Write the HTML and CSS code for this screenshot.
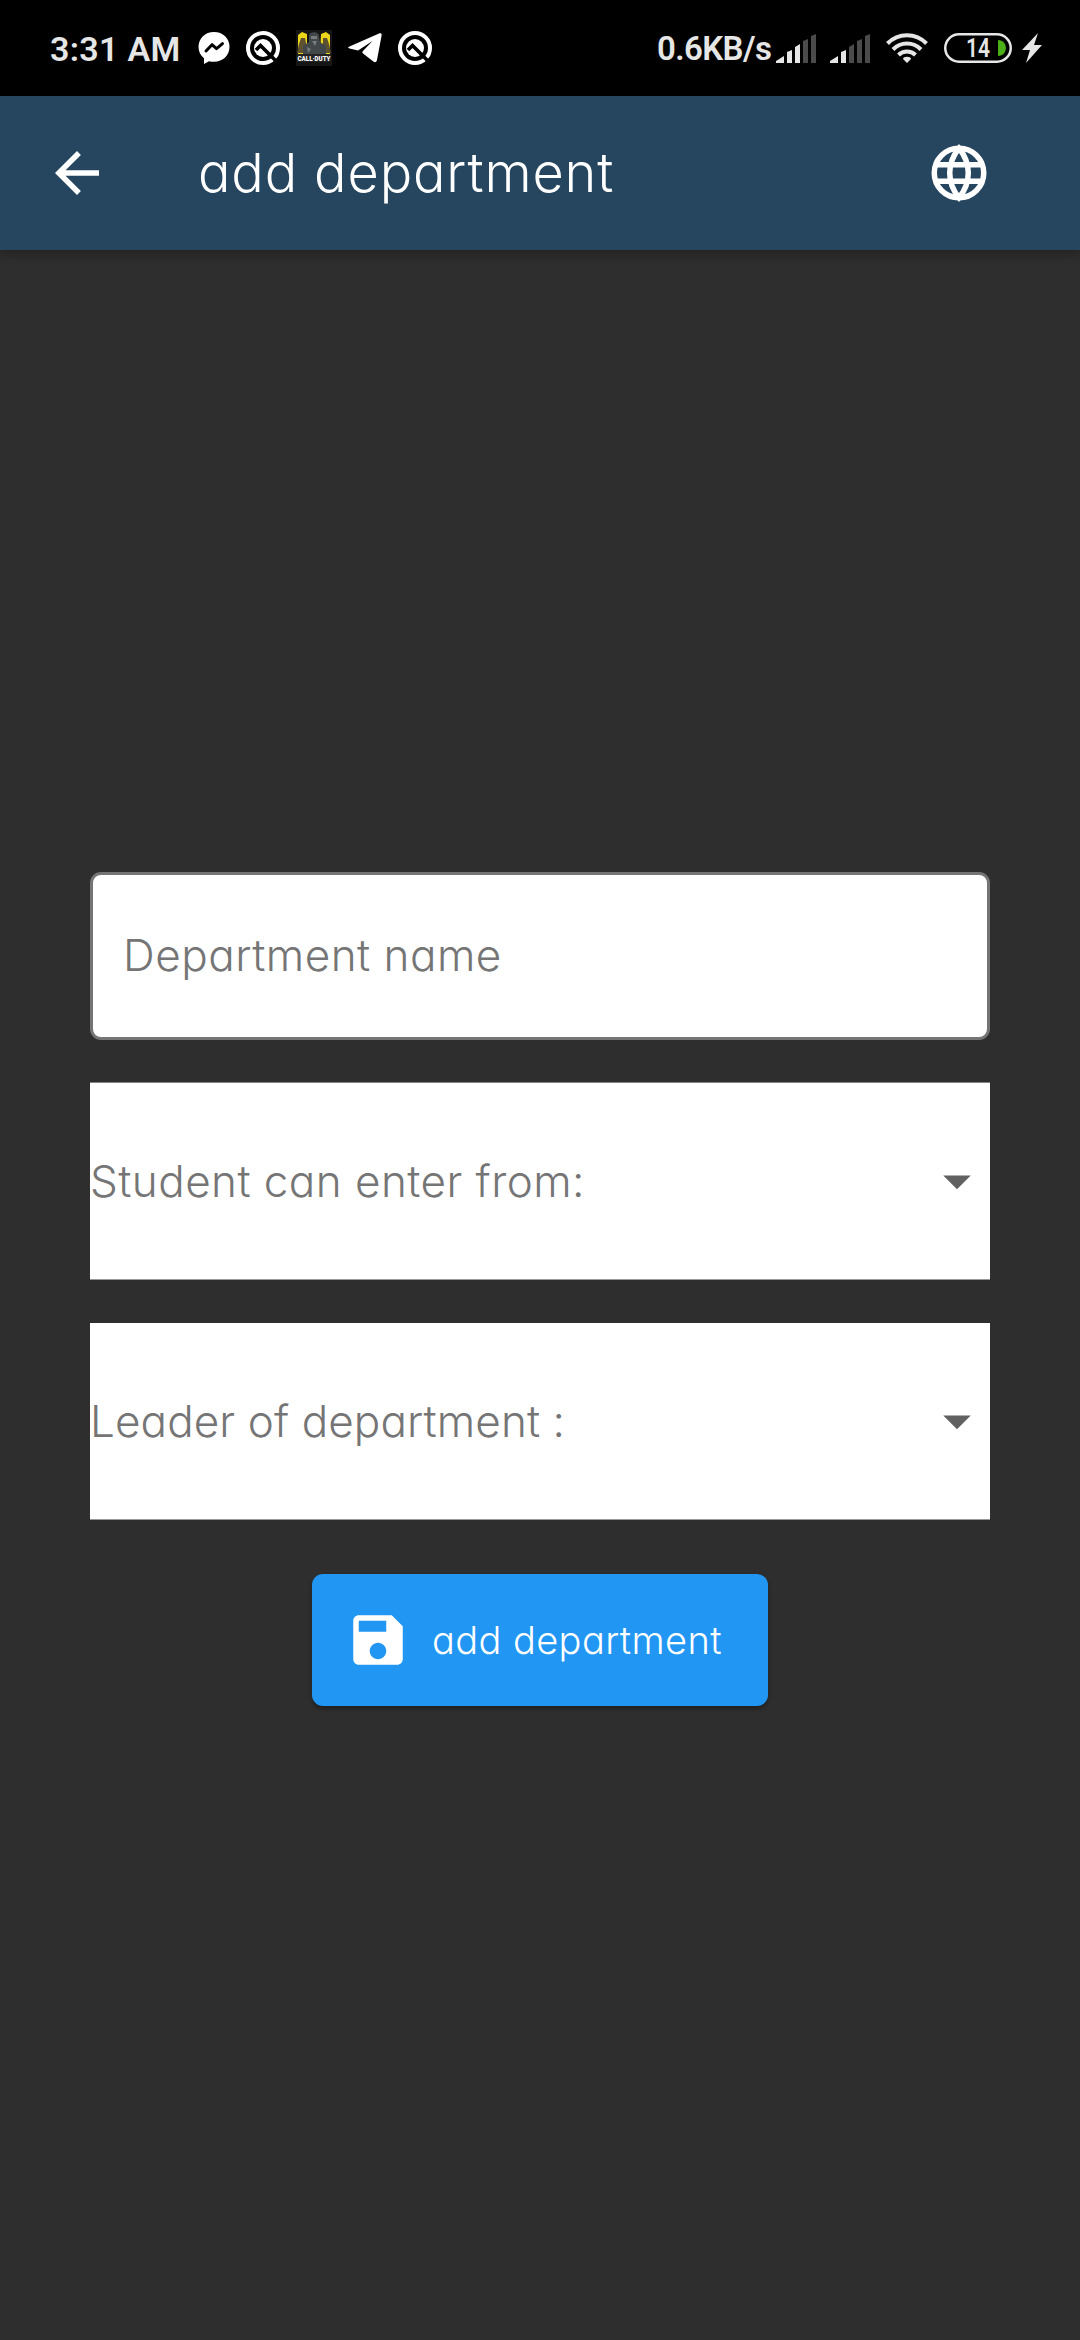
FILE: index.html
```html
<!DOCTYPE html>
<html lang="en">
<head>
<meta charset="utf-8">
<title>add department</title>
<link rel="stylesheet" href="styles.css">
</head>
<body>
<div class="screen">
  <div class="status">
    <span class="time">3:31 AM</span>
    <div class="notifications">
      <svg width="32" height="32" viewBox="0 0 32 32"><path fill="#fff" d="M16 0C7 0 .5 6.300.5 14.800c0 5 2.200 8.900 5.500 11.400V32l5-2.800c1.600.5 3.300.6 5 .6 9 0 15.500-6.500 15.500-15S25 0 16 0z"/><path d="M8 19l6-6.300 4.500 4 6-5" fill="none" stroke="#000" stroke-width="3" stroke-linejoin="round" stroke-linecap="round"/></svg>
      <svg width="34" height="34" viewBox="0 0 34 34"><circle cx="17" cy="17" r="15" stroke-width="4" fill="none" stroke="#fff"/><circle cx="17" cy="17" r="9" fill="#fff"/><path d="M10 19l4.500-4.500L30 30" stroke="#000" stroke-width="3.600" fill="none"/></svg>
      <svg class="game" width="36" height="36" viewBox="0 0 36 36"><rect width="36" height="36" fill="#151513"/><path fill="#ecd51a" d="M2 5l4-3 5 2v20H2zM25 4l5-2 4 3v19H24z"/><path fill="#5d5130" d="M5 8h4l1 5 3 10H1l2-9zM27 8h4l2 6 2 9H24l3-10z"/><path fill="#42474a" d="M13 6c0-5 10-5 10 0l1 6 6 4v9H7v-9l6-4z"/><path fill="#777b7b" d="M15 6h6v3h-6zM16 11h5l-2 5zM11 17l4 2-3 4z"/><path fill="#222322" d="M1 24h34v8H1z"/><text class="game-name" x="1.500" y="30.500" textLength="33" lengthAdjust="spacingAndGlyphs">CALL·DUTY</text></svg>
      <svg width="34" height="30" viewBox="0 0 34 30"><path fill="#fff" d="M1.500 13.400L31 .4c2-.8 3 .3 2.600 2.200L29 27c-.5 2.200-1.900 2.700-3.600 1.500L15 20.500c-1-.8-.8-1.600 0-2.500l9.500-10L10 17.500 1.600 15.500C-.3 15-.3 14.200 1.500 13.400z"/></svg>
      <svg width="34" height="34" viewBox="0 0 34 34"><circle cx="17" cy="17" r="15" stroke-width="4" fill="none" stroke="#fff"/><circle cx="17" cy="17" r="9" fill="#fff"/><path d="M10 19l4.500-4.500L30 30" stroke="#000" stroke-width="3.600" fill="none"/></svg>
    </div>
    <span class="speed">0.6KB/s</span>
    <svg class="signal" width="40" height="29" viewBox="0 0 40 29"><path fill="#e6e6e6" d="M0 29v-2l8-5v7zM11 29V18l5-2v13zM19 29V13l5-3v19z"/><path fill="#4b4b4b" d="M27 29V7l5-2v24zM35 29V2l5-2v29z"/></svg>
    <svg class="signal second" width="40" height="29" viewBox="0 0 40 29"><path fill="#e6e6e6" d="M0 29v-2l8-5v7zM11 29V18l5-2v13z"/><path fill="#4b4b4b" d="M19 29V13l5-3v19zM27 29V7l5-2v24zM35 29V2l5-2v29z"/></svg>
    <svg class="wifi" width="42" height="30" viewBox="0 0 42 30"><g fill="none" stroke="#e6e6e6" stroke-width="4"><path d="M1.500 10.500a27 27 0 0 1 39 0M7 16.500a19.500 19.500 0 0 1 28 0M12.500 22a12 12 0 0 1 17 0"/></g><path fill="#e6e6e6" d="M21 30l-4-4c0-3 8-3 8 0z"/></svg>
    <svg class="battery" width="68" height="30" viewBox="0 0 68 30"><rect x="1.250" y="1.250" width="65.500" height="27.500" rx="13.750" fill="none" stroke="#e6e6e6" stroke-width="2.500"/><path fill="#4caf17" d="M54 7c10.500 0 10.500 16 0 16z"/><text class="charge" x="22" y="24" textLength="24" lengthAdjust="spacingAndGlyphs">14</text></svg>
    <svg class="bolt" width="20" height="30" viewBox="0 0 20 30"><path fill="#e6e6e6" d="M16 0L0 17h8L4 30 20 12h-8z"/></svg>
  </div>
  <header class="appbar">
    <svg width="66" height="66" viewBox="0 0 24 24"><path fill="#fff" d="M20 11H7.830l5.590-5.590L12 4l-8 8 8 8 1.410-1.410L7.830 13H20v-2z"/></svg>
    <h1 class="title">add department</h1>
    <svg class="globe" width="66" height="66" viewBox="0 0 24 24"><g fill="none" stroke="#fff" stroke-width="2"><circle cx="12" cy="12" r="9"/><path d="M4 9h16M4 15h16M12 3c-4.500 5.500-4.500 12.500 0 18 4.500-5.500 4.500-12.500 0-18z"/></g></svg>
  </header>
  <main class="form">
    <div class="field"><span class="name">Department name</span></div>
    <div class="select first"><span class="from">Student can enter from:</span><svg width="66" height="66" viewBox="0 0 24 24"><path fill="#616161" d="M7 10l5 5 5-5z"/></svg></div>
    <div class="select"><span class="leader">Leader of department :</span><svg width="66" height="66" viewBox="0 0 24 24"><path fill="#616161" d="M7 10l5 5 5-5z"/></svg></div>
    <div class="button"><svg width="66" height="66" viewBox="0 0 24 24"><path fill="#fff" d="M17 3H5c-1.110 0-2 .9-2 2v14c0 1.100.89 2 2 2h14c1.100 0 2-.9 2-2V7l-4-4zm-5 16c-1.660 0-3-1.340-3-3s1.340-3 3-3 3 1.340 3 3-1.340 3-3 3zm3-10H5V5h10v4z"/></svg><span>add department</span></div>
  </main>
</div>
</body>
</html>
```
FILE: styles.css
```css
* { box-sizing: border-box; }
body { margin: 0; background: #2e2e2e; }
svg { display: block; flex: none; }
.screen {
  width: 1080px; height: 2340px; background: #2e2e2e; overflow: hidden;
  display: flex; flex-direction: column;
  font-family: Inter, "Open Sans", sans-serif; font-weight: 300;
  font-feature-settings: "cv11";
}
.status {
  height: 96px; flex: none; background: #000; color: #e6e6e6;
  display: flex; align-items: center; padding: 0 38px 0 50px;
  font-family: Roboto, sans-serif; font-weight: 600; white-space: nowrap;
}
.time { width: 148px; font-size: 34px; line-height: 40px; letter-spacing: .3px; padding-top: 2px; }
.notifications { display: flex; align-items: center; gap: 16px; }
.speed { margin-left: auto; width: 119px; font-size: 33px; line-height: 40px; letter-spacing: -.6px; padding-top: 1px; }
.second { margin-left: 14px; }
.wifi { margin-left: 16px; }
.battery { margin-left: 16px; }
.bolt { margin-left: 10px; }
.game { overflow: visible; }
.game-name { font: 900 8px Roboto, sans-serif; fill: #fff; }
.charge { font: 600 25px Roboto, sans-serif; fill: #e6e6e6; }
.appbar {
  height: 154px; flex: none; background: #26465f; color: #fff;
  display: flex; align-items: center; padding: 0 88px 0 44px;
  box-shadow: 0 4px 10px rgba(0, 0, 0, .28);
}
.title { margin: 0 0 0 88px; font-size: 54px; font-weight: 300; line-height: 64px; letter-spacing: .85px; white-space: nowrap; }
.globe { margin-left: auto; }
.form { padding: 622px 90px 0; display: flex; flex-direction: column; color: #757575; font-size: 44px; line-height: 54px; white-space: nowrap; }
.field { height: 168px; background: #fff; border: 3px solid #757575; border-radius: 11px; display: flex; align-items: center; padding-left: 30px; }
.field span { padding-bottom: 2px; }
.select { height: 197px; margin-top: 43px; background: #fff; border-bottom: 1px solid #999; display: flex; align-items: center; justify-content: space-between; }
.select.first { height: 198px; margin-top: 42px; border-top: 1px solid #858585; }
.name { letter-spacing: .5px; }
.from { letter-spacing: .45px; }
.leader { letter-spacing: .1px; }
.button {
  width: 456px; height: 132px; margin: 54px auto 0; padding-left: 33px;
  display: flex; align-items: center; gap: 21px;
  background: #2196f3; color: #fff; border-radius: 11px; font-size: 38px; letter-spacing: .4px;
  box-shadow: 0 3px 4px rgba(0, 0, 0, .3);
}
```
